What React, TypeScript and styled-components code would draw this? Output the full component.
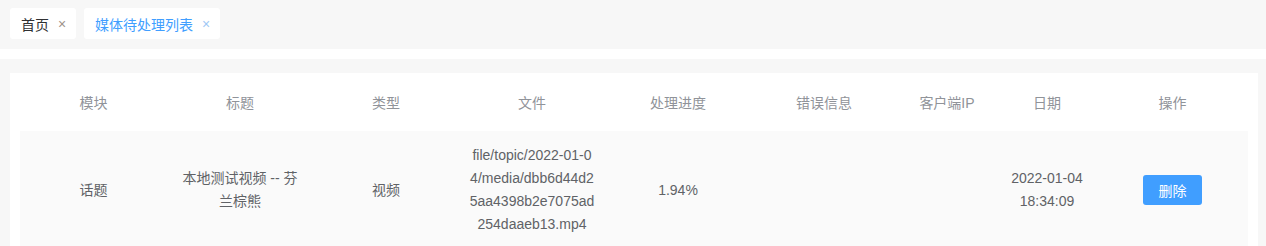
import styled, { createGlobalStyle } from "styled-components";

const GlobalStyle = createGlobalStyle`
	html, body {
		margin: 0;
		padding: 0;
		background: #f7f7f7;
		font-family: "Liberation Sans", "Noto Sans CJK SC", sans-serif;
	}
`;

type Column = { key: string; title: string; width: number };

const columns: Column[] = [
	{ key: "module", title: "模块", width: 147 },
	{ key: "title", title: "标题", width: 146 },
	{ key: "type", title: "类型", width: 146 },
	{ key: "file", title: "文件", width: 146 },
	{ key: "progress", title: "处理进度", width: 146 },
	{ key: "error", title: "错误信息", width: 146 },
	{ key: "ip", title: "客户端IP", width: 100 },
	{ key: "date", title: "日期", width: 100 },
	{ key: "action", title: "操作", width: 151 },
];

const rows = [
	{
		module: "话题",
		title: "本地测试视频 -- 芬兰棕熊",
		type: "视频",
		file: "file/topic/2022-01-04/media/dbb6d44d25aa4398b2e7075ad254daaeb13.mp4",
		progress: "1.94%",
		error: "",
		ip: "",
		date: "2022-01-04 18:34:09",
	},
];

const tabs = [
	{ label: "首页", active: false },
	{ label: "媒体待处理列表", active: true },
];

export default function App() {
	return (
		<>
			<GlobalStyle />
			<TabBar>
				{tabs.map((t) => (
					<Tab key={t.label} $active={t.active}>
						{t.label}
						<Close $active={t.active}>×</Close>
					</Tab>
				))}
			</TabBar>
			<Divider />
			<Main>
				<Card>
					<Table>
						<colgroup>
							{columns.map((c) => (
								<col key={c.key} style={{ width: c.width }} />
							))}
						</colgroup>
						<thead>
							<tr>
								{columns.map((c) => (
									<Th key={c.key}>{c.title}</Th>
								))}
							</tr>
						</thead>
						<tbody>
							{rows.map((r, i) => (
								<BodyRow key={i}>
									<Td>{r.module}</Td>
									<Td>{r.title}</Td>
									<Td>{r.type}</Td>
									<Td $breakAll>{r.file}</Td>
									<Td>{r.progress}</Td>
									<Td>{r.error}</Td>
									<Td>{r.ip}</Td>
									<Td>{r.date}</Td>
									<Td>
										<DeleteButton>删除</DeleteButton>
									</Td>
								</BodyRow>
							))}
						</tbody>
					</Table>
				</Card>
			</Main>
		</>
	);
}

const TabBar = styled.div`
	display: flex;
	gap: 8px;
	padding: 8px 10px 10px;
	height: 31px;
`;

const Tab = styled.div<{ $active: boolean }>`
	display: flex;
	align-items: center;
	gap: 9px;
	height: 31px;
	padding: 0 11px;
	box-sizing: border-box;
	background: #fff;
	border-radius: 3px;
	font-size: 14px;
	color: ${(p) => (p.$active ? "#409eff" : "#303133")};
`;

const Close = styled.span<{ $active: boolean }>`
	display: inline-block;
	width: 7px;
	text-align: center;
	font-size: 14px;
	line-height: 1;
	color: ${(p) => (p.$active ? "#9fc8f5" : "#a0928a")};
`;

const Divider = styled.div`
	height: 10px;
	background: #fff;
`;

const Main = styled.div`
	padding: 14px 8px 0 10px;
`;

const Card = styled.div`
	background: #fff;
	padding: 0 10px;
	height: 173px;
	overflow: hidden;
`;

const Table = styled.table`
	border-collapse: collapse;
	table-layout: fixed;
	width: 1228px;
`;

const Th = styled.th`
	height: 58px;
	padding: 0 10px;
	font-size: 14px;
	font-weight: normal;
	color: #909399;
	text-align: center;
`;

const BodyRow = styled.tr`
	background: #fafafa;
`;

const Td = styled.td<{ $breakAll?: boolean }>`
	height: 118px;
	padding: 12px 10px;
	box-sizing: border-box;
	font-size: 14px;
	line-height: 23px;
	color: #606266;
	text-align: center;
	word-break: ${(p) => (p.$breakAll ? "break-all" : "normal")};
`;

const DeleteButton = styled.button`
	width: 59px;
	height: 30px;
	border: none;
	border-radius: 3px;
	background: #409eff;
	color: #fff;
	font-family: inherit;
	font-size: 14px;
	cursor: pointer;
`;
